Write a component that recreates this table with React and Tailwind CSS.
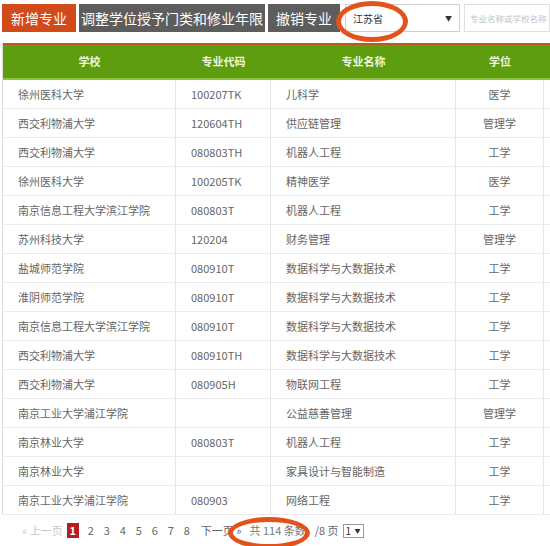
import React from "react";

const rows = [
  ["徐州医科大学", "100207TK", "儿科学", "医学"],
  ["西交利物浦大学", "120604TH", "供应链管理", "管理学"],
  ["西交利物浦大学", "080803TH", "机器人工程", "工学"],
  ["徐州医科大学", "100205TK", "精神医学", "医学"],
  ["南京信息工程大学滨江学院", "080803T", "机器人工程", "工学"],
  ["苏州科技大学", "120204", "财务管理", "管理学"],
  ["盐城师范学院", "080910T", "数据科学与大数据技术", "工学"],
  ["淮阴师范学院", "080910T", "数据科学与大数据技术", "工学"],
  ["南京信息工程大学滨江学院", "080910T", "数据科学与大数据技术", "工学"],
  ["西交利物浦大学", "080910TH", "数据科学与大数据技术", "工学"],
  ["西交利物浦大学", "080905H", "物联网工程", "工学"],
  ["南京工业大学浦江学院", "", "公益慈善管理", "管理学"],
  ["南京林业大学", "080803T", "机器人工程", "工学"],
  ["南京林业大学", "", "家具设计与智能制造", "工学"],
  ["南京工业大学浦江学院", "080903", "网络工程", "工学"],
];

const cols = "grid grid-cols-[173px_95px_185px_88px_1fr]";

export default function App() {
  return (
    <div
      className="relative w-[550px] h-[546px] overflow-hidden bg-white"
      style={{ fontFamily: '"Microsoft YaHei", "Noto Sans CJK SC", sans-serif' }}
    >
      {/* toolbar */}
      <div className="flex items-center h-[34px] pt-[2px] pl-[2px] gap-[3px]">
        <button className="h-[28px] w-[74px] bg-[#d2491a] text-white text-[14px]">新增专业</button>
        <button className="h-[28px] w-[186px] bg-[#5d5d5d] text-white text-[14px]">调整学位授予门类和修业年限</button>
        <button className="h-[28px] w-[72px] bg-[#5d5d5d] text-white text-[14px]">撤销专业</button>
        <div className="ml-[2px] h-[28px] w-[115px] border border-[#cfcfcf] flex items-center justify-between px-[7px] text-[10px] text-[#333]">
          <span>江苏省</span>
          <span className="text-[7px]">▼</span>
        </div>
        <div className="ml-[1px] h-[28px] flex-1 border border-[#e0e0e0] flex items-center pl-[5px] text-[8.5px] text-[#c4c4c4] whitespace-nowrap overflow-hidden">
          专业名称或学校名称
        </div>
      </div>

      {/* table */}
      <div className="mt-[9px] ml-[2px] border-l border-[#dcdcdc]">
        <div className={`${cols} h-[37px] border-t-2 border-[#c0581a] bg-[#5e9c10] border-b-2 border-b-[#8cc43c] text-[11px] font-bold text-[#eef7df]`}>
          <div className="flex items-center justify-center">学校</div>
          <div className="flex items-center justify-center">专业代码</div>
          <div className="flex items-center justify-center">专业名称</div>
          <div className="flex items-center justify-center">学位</div>
          <div />
        </div>
        {rows.map((r, i) => (
          <div key={i} className={`${cols} h-[29px] border-b border-[#ececec] text-[11px] text-[#666]`}>
            <div className="flex items-center pl-[15px] border-r border-[#e6e6e6]">{r[0]}</div>
            <div className="flex items-center pl-[15px] border-r border-[#e6e6e6]">{r[1]}</div>
            <div className="flex items-center pl-[15px] border-r border-[#e6e6e6]">{r[2]}</div>
            <div className="flex items-center justify-center border-r border-[#e6e6e6]">{r[3]}</div>
            <div />
          </div>
        ))}
      </div>

      {/* pagination */}
      <div className="flex items-center h-[31px] pl-[22px] text-[11px] text-[#666]">
        <span className="text-[#c8c8c8]">« 上一页</span>
        <span className="ml-[4px] h-[15px] w-[12px] bg-[#b81c1c] text-white font-bold flex items-center justify-center">1</span>
        {[2, 3, 4, 5, 6, 7, 8].map((n) => (
          <span key={n} className="ml-[8px] w-[8px] text-center">{n}</span>
        ))}
        <span className="ml-[10px]">下一页 »</span>
        <span className="ml-[8px] text-[#777]">共 114 条数</span>
        <span className="ml-[9px]">/8 页</span>
        <span className="ml-[4px] h-[14px] w-[21px] border border-[#999] flex items-center justify-between px-[2px] text-[10px] text-[#333]">
          1<span className="text-[6px]">▼</span>
        </span>
      </div>

      {/* annotation ellipses */}
      <div className="absolute left-[336px] top-[1px] w-[72px] h-[41px] rounded-[50%] border-[5px] border-[#e2531c]" />
      <div className="absolute left-[228px] top-[517px] w-[82px] h-[32px] rounded-[50%] border-[5px] border-[#e2531c]" />
    </div>
  );
}
